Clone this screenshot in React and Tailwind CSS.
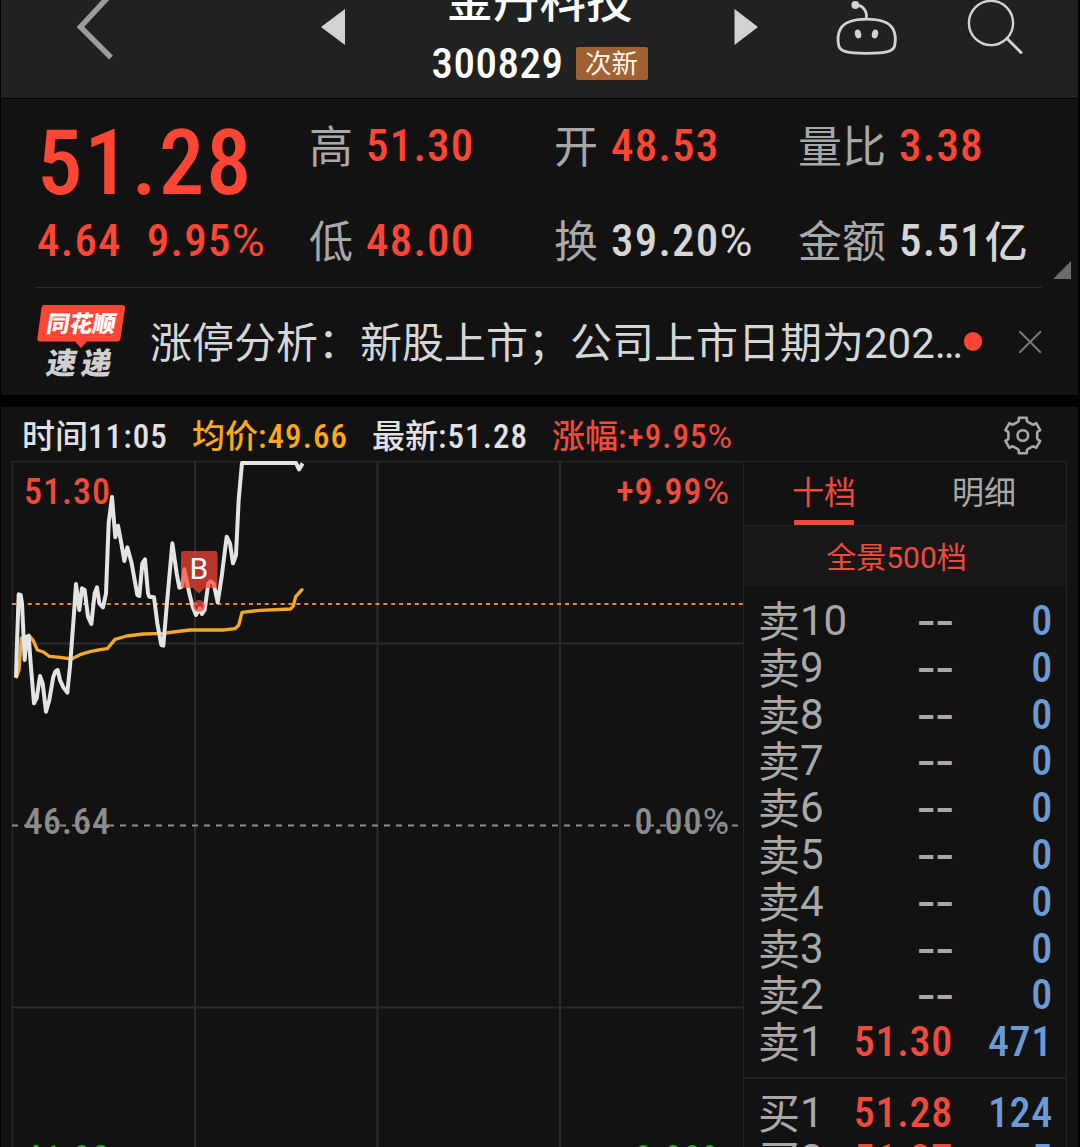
const NUM = "font-medium [font-stretch:75%]";

const GRAY = "text-[#a8a8a8]";
const LIGHT = "text-[#d6d6d6]";
const RED = "text-[#ff4533]";

const sells = [
  ["卖", "10", "--", "0"],
  ["卖", "9", "--", "0"],
  ["卖", "8", "--", "0"],
  ["卖", "7", "--", "0"],
  ["卖", "6", "--", "0"],
  ["卖", "5", "--", "0"],
  ["卖", "4", "--", "0"],
  ["卖", "3", "--", "0"],
  ["卖", "2", "--", "0"],
  ["卖", "1", "51.30", "471"]
];

const buys = [
  ["买", "1", "51.28", "124"],
  ["买", "2", "51.27", "5"]
];

// chart data is stored at 3x so the curves keep sub-pixel detail
const pricePoints =
  "48,833 50,760 56,583 62,585 66,610 74,780 80,710 86,707 92,790 102,910 110,895 120,828 128,850 138,935 148,900 160,830 166,815 173,810 180,840 190,862 202,878 210,800 222,640 228,552 238,630 246,565 254,570 264,650 274,672 284,580 291,562 298,610 309,622 318,580 326,370 336,291 346,412 354,377 364,430 373,483 382,442 395,490 412,585 418,588 427,490 435,478 444,580 448,590 462,592 472,670 484,735 490,737 500,620 517,430 530,520 538,563 546,560 553,508 568,580 578,620 588,645 600,625 606,642 614,630 625,550 632,544 641,550 653,607 665,530 680,410 690,430 699,490 708,465 716,300 726,189 888,189 897,208 908,190";
const avgPoints =
  "50,830 57,810 64,715 74,710 90,710 100,722 112,750 130,756 148,769 180,772 215,777 240,764 270,755 300,749 322,746 345,718 380,708 430,702 490,700 520,696 570,690 670,690 705,686 716,676 726,637 780,631 872,627 880,618 887,590 906,569";

function gearPath(cx, cy) {
  const pts = [];
  for (let k = 0; k < 6; k++) {
    const mid = -90 + k * 60;
    [
      [-20, 14.6],
      [-15, 15.4],
      [-12.5, 18.2],
      [12.5, 18.2],
      [15, 15.4],
      [20, 14.6]
    ].forEach(([d, r]) => {
      const a = ((mid + d) * Math.PI) / 180;
      pts.push(`${(cx + r * Math.cos(a)).toFixed(2)} ${(cy + r * Math.sin(a)).toFixed(2)}`);
    });
  }
  return `M${pts.join("L")}Z`;
}

function Percent() {
  return <span className="font-normal [font-stretch:100%]">%</span>;
}

function Header() {
  return (
    <header className="flex h-[98px] items-start bg-[#202221]">
      <div className="w-[319px] shrink-0 pl-[75px]">
        <svg width="40" height="62" viewBox="0 0 40 62" fill="none" stroke="#9b9b9b" strokeWidth="5.5">
          <path d="M35 -6L4.5 27L35 57.5" />
        </svg>
      </div>
      <svg className="shrink-0" width="25" height="48" viewBox="0 0 25 48" fill="#d2d2d2">
        <path d="M1 27L25 9V45Z" />
      </svg>
      <div className="flex w-[389px] shrink-0 flex-col items-center">
        <div className="-mt-[22px] text-[46.5px] leading-[46px] font-medium text-white">金丹科技</div>
        <div className="mt-[21px] flex h-9 items-center gap-[12px]">
          <span className={`${NUM} text-[43px] leading-9 tracking-[.5px] text-white`}>300829</span>
          <span className="flex h-[33px] w-[72px] items-center justify-center rounded-[2px] bg-[#a06232] pt-[2px] text-[26.5px] leading-8 text-[#fdf6ee]">
            次新
          </span>
        </div>
      </div>
      <svg className="shrink-0" width="25" height="48" viewBox="0 0 25 48" fill="#d2d2d2">
        <path d="M.5 9L24 27L.5 45Z" />
      </svg>
      <svg className="ml-[76px] shrink-0" width="64" height="58" viewBox="0 0 64 58" fill="none" stroke="#d2d2d2" strokeWidth="2.8">
        <path d="M31.700 19.200C45 19.200 54 22 58 29C60.600 34 60.700 41 59.600 46C57.800 51.500 52 53.300 31.700 53.300C11.400 53.300 5.600 51.500 3.800 46C2.700 41 2.800 34 5.400 29C9.400 22 18.400 19.200 31.700 19.200Z" />
        <path d="M21 5C28 5.500 32.500 11 31.200 18" />
        <circle cx="20.300" cy="5" r="3.900" fill="#d2d2d2" stroke="none" />
        <ellipse cx="23" cy="34" rx="3.100" ry="4.500" fill="#d2d2d2" stroke="none" transform="rotate(-14 23 34)" />
        <ellipse cx="40" cy="34" rx="3.100" ry="4.500" fill="#d2d2d2" stroke="none" transform="rotate(14 40 34)" />
      </svg>
      <svg className="ml-[67px] shrink-0" width="60" height="58" viewBox="0 0 60 58" fill="none" stroke="#d2d2d2" strokeWidth="2.400">
        <circle cx="25" cy="23" r="22.100" />
        <path d="M41 38.500L55 52.500" strokeWidth="3" strokeLinecap="round" />
      </svg>
    </header>
  );
}

function Stat({ label, color, children }) {
  return (
    <div className="flex h-[60px] items-center gap-[13px] whitespace-nowrap">
      <span className={`translate-y-[1.5px] text-[44px] leading-[60px] ${GRAY}`}>{label}</span>
      <span className={`${NUM} ${color} text-[45px] leading-[60px] tracking-[1.2px]`}>{children}</span>
    </div>
  );
}

function Quote() {
  return (
    <section className="relative flex h-[188px] shrink-0 pt-[17px] pl-[36px]">
      <div className={`w-[272px] shrink-0 ${NUM} ${RED}`}>
        <div className="h-[94px] text-[91px] leading-[94px] tracking-[1.8px]">51.28</div>
        <div className="flex h-[60px] gap-[25px] text-[45px] leading-[61px] tracking-[1.2px]">
          <span>4.64</span>
          <span>
            9.95
            <Percent />
          </span>
        </div>
      </div>
      <div className="grid h-[155px] grid-cols-[245px_244px_260px] content-between">
        <Stat label="高" color={RED}>51.30</Stat>
        <Stat label="开" color={RED}>48.53</Stat>
        <Stat label="量比" color={RED}>3.38</Stat>
        <Stat label="低" color={RED}>48.00</Stat>
        <Stat label="换" color={LIGHT}>
          39.20
          <Percent />
        </Stat>
        <Stat label="金额" color={LIGHT}>
          5.51<span className="ml-px inline-block translate-y-[2px] text-[43px] tracking-normal">亿</span>
        </Stat>
      </div>
      <svg className="absolute right-[7px] bottom-[8px]" width="18" height="18" viewBox="0 0 18 18" fill="#6b6b6b">
        <path d="M18 0V18H0Z" />
      </svg>
    </section>
  );
}

function News() {
  return (
    <section className="ml-[35px] flex h-[108px] w-[1006px] items-start border-t border-[#2d2d2d]">
      <div className="relative mt-[17px] h-[76px] w-[90px] shrink-0">
        <svg className="absolute inset-0" width="90" height="44" viewBox="0 0 90 44" fill="#ff4533">
          <path d="M8.5 0H86.5Q89.300 0 89 3L84.500 33.500Q84 36.500 81 36.500H51L45 43L39 36.500H4Q1 36.500 1.400 33.500L5.500 3Q6 0 8.500 0Z" />
        </svg>
        <div className="relative flex h-[37px] -skew-x-10 items-center justify-center pt-[3px] pl-[1px] text-[23px] leading-[34px] font-black text-white">
          同花顺
        </div>
        <div className="relative mt-[4px] flex h-8 -skew-x-10 items-center gap-[5px] pt-[3px] pl-[11px] text-[30px] leading-8 font-black text-[#cfcfcf]">
          <span>速</span>
          <span>递</span>
        </div>
      </div>
      <div className={`ml-[24px] h-[108px] w-[813px] pt-[1px] text-[42px] leading-[110px] whitespace-nowrap ${LIGHT}`}>
        涨停分析：新股上市；公司上市日期为202…
      </div>
      <span className="mt-[44px] ml-[1px] h-[19px] w-[19px] rounded-full bg-[#ff4533]" />
      <svg className="mt-[41px] ml-[36px]" width="26" height="26" viewBox="0 0 26 26" stroke="#777" strokeWidth="2.2">
        <path d="M1.500 1.500L24.500 24.500M24.500 1.500L1.500 24.500" />
      </svg>
    </section>
  );
}

function ChartInfo() {
  const cls = `${NUM} text-[33px] tracking-[1.1px]`;
  return (
    <div className="flex h-[54px] items-center pt-[6px] pl-[21px] text-[33px] leading-[54px] font-medium whitespace-nowrap">
      <div className="w-[170px] text-[#e2e2e2]">
        时间<span className={cls}>11:05</span>
      </div>
      <div className="w-[180px] text-[#fda915]">
        均价<span className={cls}>:49.66</span>
      </div>
      <div className="w-[180px] text-[#e2e2e2]">
        最新<span className={cls}>:51.28</span>
      </div>
      <div className="w-[450px] text-[#ef4a3a]">
        涨幅
        <span className={cls}>
          :+9.95
          <Percent />
        </span>
      </div>
      <svg className="mb-[3px] shrink-0" width="42" height="42" viewBox="0 0 42 42" fill="none" stroke="#a8a8a8" strokeWidth="2.600" strokeLinejoin="round">
        <path d={gearPath(20.8, 20.5)} />
        <circle cx="20.800" cy="20.500" r="5.300" />
      </svg>
    </div>
  );
}

function Chart() {
  return (
    <div className="relative w-[742px] shrink-0">
      <svg className="absolute inset-0" width="742" height="686" viewBox="1 0 742 686" fill="none">
        <path d="M12.500 0V686M12 .5H743" stroke="#272727" strokeWidth="1.500" />
        <path d="M195 0V686M377.500 0V686M560 0V686M12 182.500H743M12 546.500H743" stroke="#2b2b2b" strokeWidth="2" />
        <path d="M12 143H743" stroke="#e8883a" strokeWidth="2" strokeDasharray="4 3.900" />
        <path d="M12 364.500H743" stroke="#8c8c8c" strokeWidth="2" strokeDasharray="6 6" />
        <g transform="translate(0 -61) scale(.33333)" strokeWidth="12" strokeLinejoin="round">
          <polyline points={avgPoints} stroke="#f3a829" strokeLinecap="round" strokeWidth="10" />
          <polyline points={pricePoints} stroke="#e4e4e4" />
        </g>
        <g fill="#ff4537" fillOpacity=".7">
          <path d="M183 90H215Q217.500 90 217.500 92.500V124Q217.500 127 215 127H205L199 132.500L193 127H183Q181 127 181 124V92.500Q181 90 183 90Z" />
          <circle cx="199" cy="145" r="6" />
        </g>
      </svg>
      <div className={`absolute inset-0 ${NUM} text-[36px] leading-[40px] tracking-[1px]`}>
        <div className="flex h-[330px] justify-between pt-[11px] pr-[13px] pl-[23px] text-[#ef4a3a]">
          <span>51.30</span>
          <span>
            +9.99
            <Percent />
          </span>
        </div>
        <div className="flex h-[337px] justify-between pt-[11px] pr-[13px] pl-[23px] text-[#8c8c8c]">
          <span>46.64</span>
          <span>
            0.00
            <Percent />
          </span>
        </div>
        <div className="flex h-[19px] justify-between overflow-hidden pt-[11px] pr-[13px] pl-[23px] text-[#1fa51f]">
          <span>41.98</span>
          <span>
            -9.99
            <Percent />
          </span>
        </div>
      </div>
      <span className="absolute top-[90px] left-[188.5px] text-[30px] leading-[36px] text-white">B</span>
    </div>
  );
}

function LevelRow({ row }) {
  const [side, level, price, volume] = row;
  const empty = price === "--";
  return (
    <div className="grid h-[46.8px] grid-cols-[85px_110px_100px] pl-[14px] text-[42px] leading-[46px]">
      <span className={`${GRAY} whitespace-nowrap`}>
        <span className="inline-block translate-y-[2px]">{side}</span>
        {level}
      </span>
      {empty ? (
        <span className={`${GRAY} origin-right translate-x-px translate-y-px scale-x-[1.3] text-right font-medium`}>--</span>
      ) : (
        <span className={`${NUM} text-right tracking-[.7px] text-[#f24a3a]`}>{price}</span>
      )}
      <span className={`${NUM} text-right tracking-[.7px] text-[#6b9bd6]`}>{volume}</span>
    </div>
  );
}

function OrderBook() {
  return (
    <div className="w-[324px] shrink-0 border-x border-t border-[#242424]">
      <div className="flex h-[64px] border-b border-[#202020] pr-[2px] text-[32px] leading-[63px]">
        <div className="flex w-1/2 flex-col items-center text-[#ef4a3a]">
          <span className="h-[58px]">十档</span>
          <span className="h-[5px] w-[60px] bg-[#ef4a3a]" />
        </div>
        <div className={`w-1/2 text-center ${GRAY}`}>明细</div>
      </div>
      <div className="h-[60px] bg-[#171717] pr-[17px] text-center text-[30px] leading-[64px] text-[#ef4a3a]">全景500档</div>
      <div className="h-[493px] border-b-2 border-[#202020] pt-[12px]">
        {sells.map((row) => (
          <LevelRow key={row[1]} row={row} />
        ))}
      </div>
      <div className="pt-[11px]">
        {buys.map((row) => (
          <LevelRow key={row[1]} row={row} />
        ))}
      </div>
    </div>
  );
}

export default function App() {
  return (
    <div className="flex h-[1147px] w-[1080px] flex-col overflow-hidden border-r-2 border-l border-black bg-black font-[Roboto,'Noto_Sans_CJK_SC',sans-serif]">
      <Header />
      <div className="mt-px h-[296px] shrink-0 bg-[#121212]">
        <Quote />
        <News />
      </div>
      <div className="mt-[12px] h-[740px] shrink-0 bg-[#121212]">
        <ChartInfo />
        <div className="flex h-[686px] overflow-hidden">
          <Chart />
          <OrderBook />
        </div>
      </div>
    </div>
  );
}
